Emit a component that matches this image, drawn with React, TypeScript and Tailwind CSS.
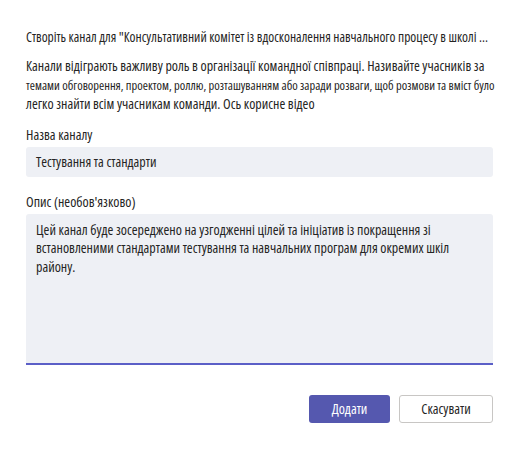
export default function App() {
  return (
    <div className="h-[449px] w-[520px] bg-white font-['Open_Sans',sans-serif] text-[14px] font-stretch-condensed text-[#252423]">
      <div className="px-[26px] pt-[28px]">
        <h2 className="truncate pr-[2px] text-[13.5px] leading-[19px]">
          Створіть канал для "Консультативний комітет із вдосконалення навчального процесу в школі Щасливий шлях"
        </h2>
        <p className="mt-[10px] whitespace-nowrap leading-[18.5px]">
          Канали відіграють важливу роль в організації командної співпраці. Називайте учасників за
          <br />
          <span className="text-[12.5px]">
            темами обговорення, проектом, роллю, розташуванням або заради розваги, щоб розмови та вміст було
          </span>
          <br />
          легко знайти всім учасникам команди. Ось корисне відео
        </p>

        <label className="mt-[11px] block leading-[19px]">Назва каналу</label>
        <div className="mt-[3px] flex h-[30px] w-[467px] items-center rounded-[3px] bg-[#eef0f5] px-[10px]">
          Тестування та стандарти
        </div>

        <label className="mt-[15px] block leading-[19px]">Опис (необов'язково)</label>
        <div className="mt-[3px] h-[151px] w-[467px] whitespace-nowrap rounded-t-[3px] border-b-2 border-[#5b5fc7] bg-[#eef0f5] px-[10px] pt-[7px] leading-[18.5px]">
          Цей канал буде зосереджено на узгодженні цілей та ініціатив із покращення зі
          <br />
          встановленими стандартами тестування та навчальних програм для окремих шкіл
          <br />
          району.
        </div>

        <div className="mt-[30px] flex w-[467px] justify-end gap-[9px]">
          <button className="h-[28px] w-[81px] rounded-[3px] bg-[#5558af] text-white">Додати</button>
          <button className="h-[28px] w-[94px] rounded-[3px] border border-[#c8c6c4] bg-white text-[#252423]">
            Скасувати
          </button>
        </div>
      </div>
    </div>
  );
}
